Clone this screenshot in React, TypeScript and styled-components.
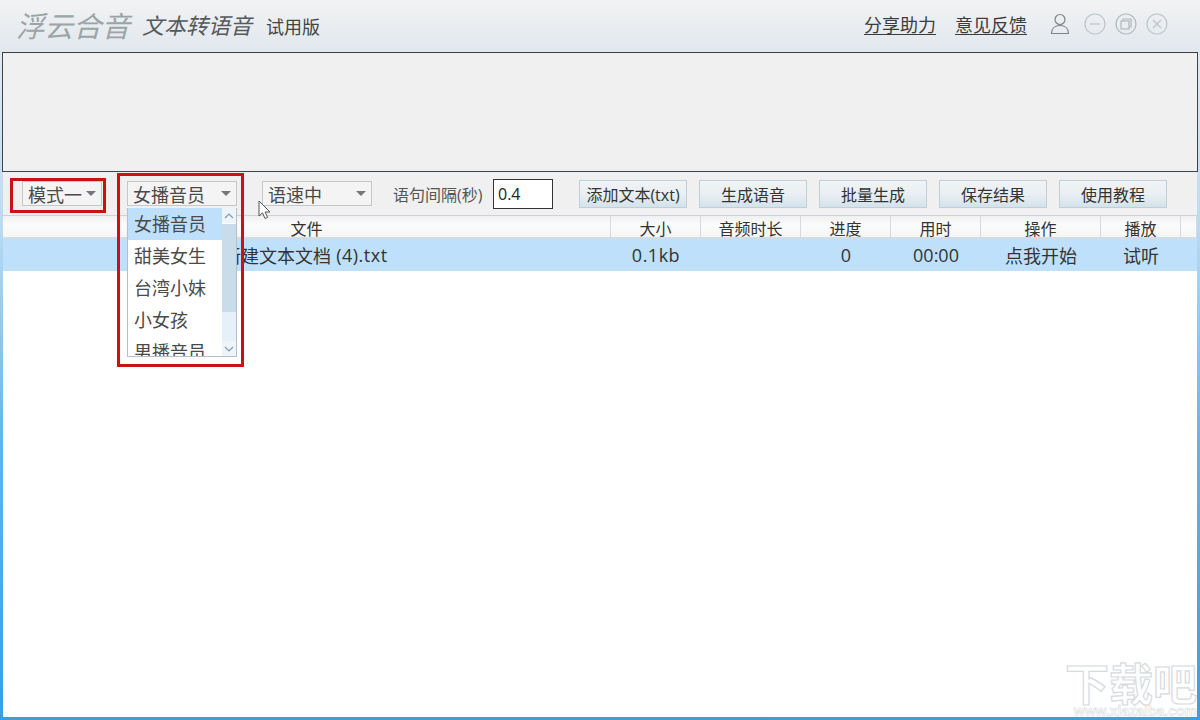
import styled, { createGlobalStyle } from 'styled-components';

const GlobalStyle = createGlobalStyle`
  html, body {
    margin: 0;
    padding: 0;
    height: 100%;
    background: #fff;
    overflow: hidden;
  }
  * {
    box-sizing: border-box;
  }
`;

const COLUMNS = '608px 90px 100px 90px 90px 120px 80px 16px';
const FONT = '"Open Sans", "Noto Sans CJK SC", sans-serif';

const Win = styled.div`
  position: relative;
  width: 1200px;
  height: 720px;
  display: flex;
  flex-direction: column;
  padding: 0 3px 3px 3px;
  font-family: ${FONT};
  color: #333;
  background: linear-gradient(180deg, #e2e8ee 0, #e2e8ee 8%, #b8daf2 32%, #62b3ea 62%, #3a9ee3 100%);
  overflow: hidden;
`;

const TitleBar = styled.div`
  height: 52px;
  margin: 0 -3px;
  padding: 0 32px 4px 16px;
  display: flex;
  align-items: center;
  background: linear-gradient(180deg, #f2f3f3 0, #e1e7ed 100%);
`;

const Logo = styled.span`
  font-size: 28.5px;
  font-style: italic;
  color: #9aa5a8;
  width: 126px;
`;

const Product = styled.span`
  font-size: 22px;
  font-style: italic;
  color: #55595c;
  width: 124px;
`;

const Edition = styled.span`
  font-size: 18px;
  color: #444;
  margin-top: 4px;
`;

const Links = styled.div`
  margin-left: auto;
  display: flex;
  align-items: center;
`;

const TopLink = styled.a`
  font-size: 18px;
  color: #3c3c3c;
  text-decoration: underline;
  text-underline-offset: 2px;
  margin-right: 19px;
`;

const WinIcon = styled.svg<{ $gap?: number }>`
  display: block;
  margin-left: ${(p) => p.$gap ?? 10}px;
`;

const Banner = styled.div`
  height: 120px;
  margin: 0 -1px;
  background: #f0f0f0;
  border: 1px solid #3e4350;
  border-top-color: #3a3e4c;
`;

const Toolbar = styled.div`
  height: 43px;
  display: flex;
  align-items: center;
  padding: 0 0 0 19px;
  background: #f0f0f0;
`;

const SelectBox = styled.div<{ $w: number; $ml?: number }>`
  width: ${(p) => p.$w}px;
  height: 25px;
  margin-left: ${(p) => p.$ml ?? 0}px;
  padding: 0 5px 0 5px;
  display: flex;
  align-items: center;
  justify-content: space-between;
  font-size: 18px;
  color: #4a4a4a;
  border: 1px solid #c2c8cc;
  background: #f4f4f4;
`;

const Caret = styled.i`
  display: block;
  width: 0;
  height: 0;
  border-left: 5px solid transparent;
  border-right: 5px solid transparent;
  border-top: 5px solid #777;
`;

const Label = styled.span`
  margin-left: 21px;
  font-size: 16px;
  color: #555;
  white-space: nowrap;
  width: 100px;
`;

const NumInput = styled.div`
  width: 60px;
  height: 30px;
  padding-left: 4px;
  display: flex;
  align-items: center;
  font-size: 16px;
  color: #222;
  background: #fff;
  border: 1px solid #333;
`;

const ToolButton = styled.button<{ $ml?: number }>`
  width: 108px;
  height: 28px;
  margin-left: ${(p) => p.$ml ?? 12}px;
  padding: 0;
  font-family: ${FONT};
  font-size: 16px;
  color: #333;
  border: 1px solid #bcd0dc;
  background: linear-gradient(180deg, #f2f4f5 0, #e8eef2 55%, #d4e2ea 100%);
`;

const TableArea = styled.div`
  flex: 1;
  display: flex;
  flex-direction: column;
  background: #fff;
`;

const HeaderRow = styled.div`
  height: 24px;
  display: grid;
  grid-template-columns: ${COLUMNS};
  background: linear-gradient(180deg, #f0f0f1 0, #fbfbfb 40%, #f4f5f6 100%);
  border-bottom: 2px solid #d3dbe3;
  border-top: 1px solid #ccd2d8;
`;

const HeaderCell = styled.div`
  display: flex;
  align-items: center;
  justify-content: center;
  padding-bottom: 1px;
  font-size: 16px;
  color: #333;
  border-right: 1px solid #d4dae0;
`;

const DataRow = styled.div`
  height: 32px;
  display: grid;
  grid-template-columns: ${COLUMNS};
  background: #bee0fb;
`;

const DataCell = styled.div<{ $left?: number }>`
  display: flex;
  align-items: center;
  justify-content: ${(p) => (p.$left ? 'flex-start' : 'center')};
  padding-left: ${(p) => p.$left ?? 0}px;
  font-size: 18px;
  color: #333;
  white-space: pre;
`;

const Latin = styled.span`
  letter-spacing: 0.5px;
`;

const Dropdown = styled.div`
  position: absolute;
  left: 127px;
  top: 208px;
  width: 110px;
  height: 149px;
  display: flex;
  background: #fff;
  border: 1px solid #b4c0c8;
  border-top: none;
  overflow: hidden;
`;

const DropList = styled.div`
  width: 94px;
  flex-shrink: 0;
`;

const DropItem = styled.div<{ $on?: boolean }>`
  height: 32px;
  padding: 0 0 2px 6px;
  display: flex;
  align-items: center;
  font-size: 18px;
  color: #4a4a4a;
  background: ${(p) => (p.$on ? '#bee0fb' : '#fff')};
`;

const ScrollTrack = styled.div`
  flex: 1;
  display: flex;
  flex-direction: column;
  background: #e6f0f8;
`;

const ScrollBtn = styled.div`
  height: 15px;
  display: flex;
  align-items: center;
  justify-content: center;
  background: #eef5fa;
`;

const ScrollThumb = styled.div`
  height: 89px;
  background: #c8dce9;
  border-top: 1px solid #fff;
`;

const ScrollGap = styled.div`
  flex: 1;
`;

const RedFrame = styled.div<{ $x: number; $y: number; $w: number; $h: number }>`
  position: absolute;
  left: ${(p) => p.$x}px;
  top: ${(p) => p.$y}px;
  width: ${(p) => p.$w}px;
  height: ${(p) => p.$h}px;
  border: 3px solid #cc1018;
  pointer-events: none;
`;

const Pointer = styled.svg`
  position: absolute;
  left: 258px;
  top: 200px;
`;

const Watermark = styled.div`
  position: absolute;
  right: 3px;
  bottom: 3px;
  width: 136px;
  display: flex;
  flex-direction: column;
  align-items: flex-end;
  color: #fff;
  font-family: ${FONT};
  pointer-events: none;
`;

const MarkTitle = styled.div`
  font-size: 44px;
  line-height: 38px;
  font-weight: 700;
  white-space: nowrap;
  -webkit-text-stroke: 1.2px #d6dbde;
`;

const MarkSub = styled.div`
  margin-top: 3px;
  font-family: "Liberation Sans", sans-serif;
  font-size: 14px;
  line-height: 11px;
  font-weight: 700;
  white-space: nowrap;
  -webkit-text-stroke: 0.6px #d6dbde;
`;

const headers = ['文件', '大小', '音频时长', '进度', '用时', '操作', '播放', ''];
const voices = ['女播音员', '甜美女生', '台湾小妹', '小女孩', '男播音员'];
const buttons = ['添加文本(txt)', '生成语音', '批量生成', '保存结果', '使用教程'];

const App = () => {
  return (
    <Win>
      <GlobalStyle />
      <TitleBar>
        <Logo>浮云合音</Logo>
        <Product>文本转语音</Product>
        <Edition>试用版</Edition>
        <Links>
          <TopLink>分享助力</TopLink>
          <TopLink>意见反馈</TopLink>
          <WinIcon width="20" height="22" viewBox="0 0 20 22" fill="none" stroke="#7d8388" strokeWidth="1.2" $gap={4}>
            <circle cx="10" cy="6.5" r="5" />
            <path d="M1.5 20.5c0-5 3.5-8 8.5-8s8.5 3 8.5 8z" />
          </WinIcon>
          <WinIcon width="22" height="22" viewBox="0 0 22 22" fill="none" stroke="#bcc4ca" strokeWidth="1.2" $gap={14}>
            <circle cx="11" cy="11" r="10" />
            <path d="M6 11h10" />
          </WinIcon>
          <WinIcon width="22" height="22" viewBox="0 0 22 22" fill="none" stroke="#b0b8be" strokeWidth="1.2" $gap={9}>
            <circle cx="11" cy="11" r="10" />
            <rect x="6" y="8" width="8" height="8" />
            <path d="M8 8V6h8v8h-2" />
          </WinIcon>
          <WinIcon width="22" height="22" viewBox="0 0 22 22" fill="none" stroke="#bcc4ca" strokeWidth="1.2" $gap={9}>
            <circle cx="11" cy="11" r="10" />
            <path d="M7 7l8 8M15 7l-8 8" />
          </WinIcon>
        </Links>
      </TitleBar>
      <Banner />
      <Toolbar>
        <SelectBox $w={80}>
          模式一
          <Caret />
        </SelectBox>
        <SelectBox $w={110} $ml={25}>
          女播音员
          <Caret />
        </SelectBox>
        <SelectBox $w={110} $ml={25}>
          语速中
          <Caret />
        </SelectBox>
        <Label>语句间隔(秒)</Label>
        <NumInput>0.4</NumInput>
        {buttons.map((text, index) => (
          <ToolButton key={text} $ml={index === 0 ? 26 : 12}>
            {text}
          </ToolButton>
        ))}
      </Toolbar>
      <TableArea>
        <HeaderRow>
          {headers.map((text, index) => (
            <HeaderCell key={index}>{text}</HeaderCell>
          ))}
        </HeaderRow>
        <DataRow>
          <DataCell $left={220}>
            新建文本文档<Latin> (4).txt</Latin>
          </DataCell>
          <DataCell>
            <Latin>0.1kb</Latin>
          </DataCell>
          <DataCell />
          <DataCell>0</DataCell>
          <DataCell>00:00</DataCell>
          <DataCell>点我开始</DataCell>
          <DataCell>试听</DataCell>
          <DataCell />
        </DataRow>
      </TableArea>

      <Dropdown>
        <DropList>
          {voices.map((voice, index) => (
            <DropItem key={voice} $on={index === 0}>
              {voice}
            </DropItem>
          ))}
        </DropList>
        <ScrollTrack>
          <ScrollBtn>
            <svg width="10" height="6" viewBox="0 0 10 6" fill="none" stroke="#7f9bb0" strokeWidth="1.2">
              <path d="M1 5l4-4 4 4" />
            </svg>
          </ScrollBtn>
          <ScrollThumb />
          <ScrollGap />
          <ScrollBtn>
            <svg width="10" height="6" viewBox="0 0 10 6" fill="none" stroke="#7f9bb0" strokeWidth="1.2">
              <path d="M1 1l4 4 4-4" />
            </svg>
          </ScrollBtn>
        </ScrollTrack>
      </Dropdown>

      <RedFrame $x={10} $y={178} $w={96} $h={35} />
      <RedFrame $x={117} $y={173} $w={127} $h={194} />

      <Pointer width="14" height="20" viewBox="0 0 14 20" fill="#fff" stroke="#555" strokeWidth="1">
        <path d="M1 1v15l3.5-3.2L7 18.5l2.6-1.1-2.5-5.4H12z" />
      </Pointer>

      <Watermark>
        <MarkTitle>下载吧</MarkTitle>
        <MarkSub>www.xiazaiba.com</MarkSub>
      </Watermark>
    </Win>
  );
};

export default App;
